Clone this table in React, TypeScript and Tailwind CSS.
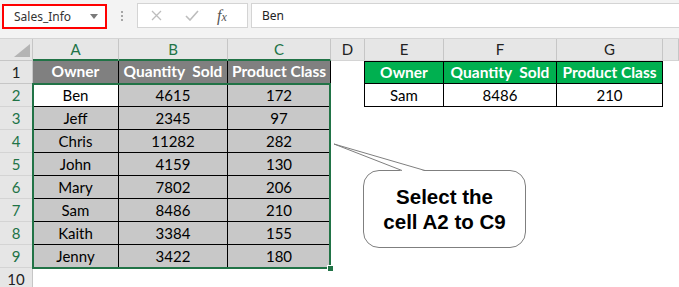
import React from "react";

const widths = ["A", "B", "C", "D", "E", "F", "G", ""];

const data = [
  ["Ben", "4615", "172"],
  ["Jeff", "2345", "97"],
  ["Chris", "11282", "282"],
  ["John", "4159", "130"],
  ["Mary", "7802", "206"],
  ["Sam", "8486", "210"],
  ["Kaith", "3384", "155"],
  ["Jenny", "3422", "180"],
];

const heads = ["Owner", "Quantity  Sold", "Product Class"];

const cell = "h-[23px] box-border flex items-center justify-center whitespace-pre";

const App = () => {
  return (
    <div
      className="relative w-[679px] h-[287px] overflow-hidden bg-white text-black"
      style={{ fontFamily: "Lato, 'Noto Sans', sans-serif" }}
    >
      {/* formula bar */}
      <div
        className="flex items-start h-[39px] pt-[3px] bg-[#f3f3f3] border-b border-[#d4d4d4] box-border"
        style={{ fontFamily: "'Noto Sans', sans-serif" }}
      >
        <div className="ml-[2px] mt-[1px] w-[105px] h-[25px] border-2 border-[#ff0000] bg-white box-border flex items-center justify-between pl-[10px] pr-[7px] text-[12px] text-[#333]">
          <span>Sales_Info</span>
          <svg width="8" height="5" viewBox="0 0 8 5">
            <path d="M0 0 L8 0 L4 5 Z" fill="#7a7a7a" />
          </svg>
        </div>
        <div className="w-[30px] h-[25px] flex flex-col items-center justify-center gap-[2px]">
          <span className="w-[2px] h-[2px] bg-[#a6a6a6]" />
          <span className="w-[2px] h-[2px] bg-[#a6a6a6]" />
          <span className="w-[2px] h-[2px] bg-[#a6a6a6]" />
        </div>
        <div className="w-[111px] h-[25px] bg-white border border-[#d4d4d4] box-border flex items-center">
          <svg className="ml-[13px]" width="11" height="11" viewBox="0 0 11 11">
            <path d="M1 1 L10 10 M10 1 L1 10" stroke="#bdbdbd" strokeWidth="1.3" />
          </svg>
          <svg className="ml-[23px]" width="14" height="11" viewBox="0 0 14 11">
            <path d="M1 6 L5 10 L13 1" stroke="#bdbdbd" strokeWidth="1.6" fill="none" />
          </svg>
          <span
            className="ml-[18px] text-[16px] italic text-[#555]"
            style={{ fontFamily: "'Liberation Serif', serif" }}
          >
            f<span className="text-[12px]">x</span>
          </span>
        </div>
        <div className="ml-[3px] flex-1 h-[25px] bg-white border border-[#d4d4d4] border-r-0 box-border flex items-center pl-[10px] text-[12px] text-[#222]">
          Ben
        </div>
      </div>

      {/* sheet */}
      <div className="grid grid-cols-[33px_86px_109px_103px_34px_79px_113px_106px_1fr] grid-rows-[22px]">
        {/* corner */}
        <div className="h-[22px] bg-[#e6e6e6] border-r border-b border-[#c6c6c6] box-border flex items-end justify-end pr-[2px] pb-[3px]">
          <svg width="16" height="13" viewBox="0 0 16 13">
            <path d="M16 0 L16 13 L0 13 Z" fill="#b4b4b4" />
          </svg>
        </div>
        {widths.map((l, i) => (
          <div
            key={l + i}
            className={
              "h-[22px] box-border flex items-center justify-center text-[15px] bg-[#e6e6e6] border-r border-[#c6c6c6] " +
              (i < 3 ? "border-b-2 border-b-[#217346] text-[#217346]" : "border-b border-b-[#d4d4d4] text-[#222]")
            }
          >
            {l}
          </div>
        ))}

        {/* row 1 */}
        <div className={cell + " bg-[#e6e6e6] border-r border-b border-[#c6c6c6] text-[15px] text-[#222]"}>1</div>
        {heads.map((h) => (
          <div key={h} className={cell + " bg-[#808080] border-r border-b border-black text-white font-bold text-[15.5px]"}>
            {h}
          </div>
        ))}
        <div className={cell + " bg-white border-r border-black"} />
        {heads.map((h) => (
          <div key={"g" + h} className={cell + " bg-[#00b050] border-r border-b border-t border-black text-white font-bold text-[15.5px]"}>
            {h}
          </div>
        ))}
        <div className={cell + " bg-white"} />

        {/* rows 2-9 */}
        {data.map((r, ri) => (
          <React.Fragment key={ri}>
            <div className={cell + " bg-[#e6e6e6] border-r border-b border-r-[#c6c6c6] border-b-[#d4d4d4] text-[15px] text-[#217346]"}>
              {ri + 2}
            </div>
            {r.map((v, ci) => (
              <div
                key={ci}
                className={
                  cell +
                  " border-r border-b border-black text-[15px] " +
                  (ri === 0 && ci === 0 ? "bg-white" : "bg-[#c8c8c8]")
                }
              >
                {v}
              </div>
            ))}
            <div className={cell + " bg-white " + (ri === 0 ? "border-r border-black" : "")} />
            {ri === 0 ? (
              <>
                <div className={cell + " bg-white border-r border-b border-black text-[15px]"}>Sam</div>
                <div className={cell + " bg-white border-r border-b border-black text-[15px]"}>8486</div>
                <div className={cell + " bg-white border-r border-b border-black text-[15px]"}>210</div>
              </>
            ) : (
              <>
                <div className={cell} />
                <div className={cell} />
                <div className={cell} />
              </>
            )}
            <div className={cell} />
          </React.Fragment>
        ))}

        {/* row 10 */}
        <div className={cell + " bg-[#e6e6e6] border-r border-[#c6c6c6] text-[15px] text-[#222]"}>10</div>
      </div>

      {/* selection A2:C9 */}
      <div className="absolute left-[32px] top-[83px] w-[299px] h-[186px] border-2 border-[#217346]" />
      <div className="absolute left-[327px] top-[265px] w-[7px] h-[7px] bg-[#217346] border border-white" />

      {/* callout */}
      <div
        className="absolute left-[363px] top-[170px] w-[163px] h-[78px] bg-white border border-[#7f7f7f] rounded-[16px] flex flex-col items-center justify-center text-[20.5px] leading-[25px] font-bold text-black"
        style={{ fontFamily: "'Liberation Sans', Arial, sans-serif" }}
      >
        <span>Select the</span>
        <span>cell A2 to C9</span>
      </div>
      <svg className="absolute left-0 top-0" width="679" height="287" viewBox="0 0 679 287">
        <path d="M402 171 L334 144 L425 171 Z" fill="white" />
        <path d="M402 170.5 L334 144 L425 170.5" fill="none" stroke="#7f7f7f" strokeWidth="1" />
      </svg>
    </div>
  );
};

export default App;
